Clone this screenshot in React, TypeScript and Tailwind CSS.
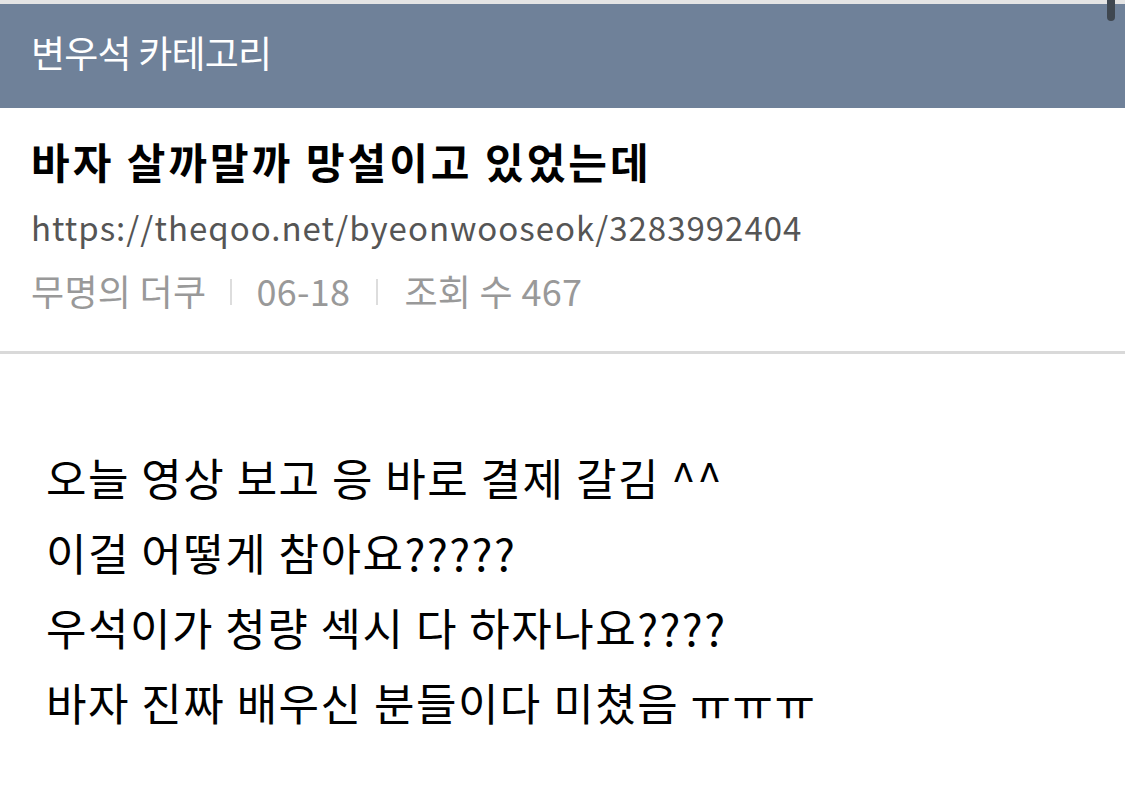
import React from "react";

const font = { fontFamily: '"Noto Sans CJK KR", "Noto Sans", sans-serif' };

export default function App() {
  return (
    <div className="relative w-[1125px] h-[804px] overflow-hidden bg-white" style={font}>
      <div className="h-[4px] bg-[#e4e4e4]" />
      <div className="h-[104px] bg-[#6f8199] flex items-center pl-[31px] pb-[8px]">
        <span className="text-white text-[37px] tracking-[-0.8px] leading-none">변우석 카테고리</span>
      </div>
      <div className="pl-[31px] pt-[25px]">
        <h1 className="text-[42px] font-bold text-black leading-[56px] tracking-[3px]">바자 살까말까 망설이고 있었는데</h1>
        <div className="text-[33px] text-[#555555] leading-[46px] mt-[15px] tracking-[1px]">https://theqoo.net/byeonwooseok/3283992404</div>
        <div className="flex items-center text-[36px] text-[#999999] leading-[46px] mt-[17px] tracking-[0.3px]">
          <span>무명의 더쿠</span>
          <span className="w-[2px] h-[26px] bg-[#dddddd] mx-[24px] mt-[4px]" />
          <span>06-18</span>
          <span className="w-[2px] h-[26px] bg-[#dddddd] mx-[26px] mt-[4px]" />
          <span>조회 수 467</span>
        </div>
      </div>
      <div className="mt-[38px] h-[3px] bg-[#d9d9d9]" />
      <div className="pl-[46px] pt-[86px] text-[44px] text-black leading-[75px] tracking-[1.5px]">
        <p>오늘 영상 보고 응 바로 결제 갈김 ^^</p>
        <p>이걸 어떻게 참아요?????</p>
        <p>우석이가 청량 섹시 다 하자나요????</p>
        <p>바자 진짜 배우신 분들이다 미쳤음 ㅠㅠㅠ</p>
      </div>
      <div className="absolute top-0 right-[10px] w-[8px] h-[21px] rounded-b-full bg-[#3f4750]" />
    </div>
  );
}
